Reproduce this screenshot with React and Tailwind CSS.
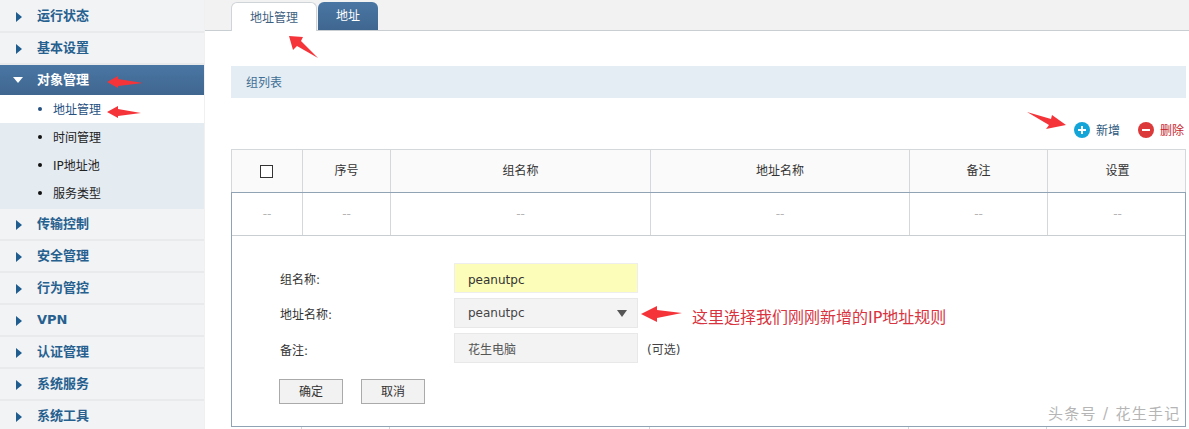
// App.jsx
import React from "react";

const FONT = { fontFamily: '"DejaVu Sans", "Noto Sans CJK SC", sans-serif' };

const topMenus = ["运行状态", "基本设置"];
const subMenus = ["地址管理", "时间管理", "IP地址池", "服务类型"];
const bottomMenus = ["传输控制", "安全管理", "行为管控", "VPN", "认证管理", "系统服务", "系统工具"];
const columns = ["序号", "组名称", "地址名称", "备注", "设置"];
const gridCols = "grid grid-cols-[71px_88px_260px_259px_138px_139px]";

const MenuItem = ({ label }) => (
  <div className="h-8 flex items-center bg-[#f2f3f5] border-b-2 border-[#e9eaeb] shrink-0">
    <svg width="6" height="10" viewBox="0 0 6 10" className="ml-4 mt-0.5">
      <path d="M0 0L6 5L0 10Z" fill="#1f5d8f" />
    </svg>
    <span className="ml-[15px] text-[13px] font-bold text-[#26608f]">{label}</span>
  </div>
);

const Field = ({ label, labelClass, children }) => (
  <div className="flex items-center">
    <span className={`w-[174px] text-xs text-[#333] ${labelClass}`}>{label}</span>
    {children}
  </div>
);

const Overlay = () => (
  <svg className="absolute left-0 top-0 pointer-events-none" width="1189" height="429">
    <g fill="#f5343a">
      <path d="M107 82L118 76L118 79L143 83L118 86L118 88Z" />
      <path d="M107 112L118 106L118 109L141 113L118 116L118 118Z" />
      <path d="M289 36L303 37L301 41L318 58L297 46L293 50Z" />
      <path d="M1066 125L1052 115L1051 119L1027 112L1049 125L1046 129Z" />
      <path d="M641 314L657 306L657 310L682 313L657 318L657 322Z" />
    </g>
  </svg>
);

const App = () => (
  <div className="relative w-[1189px] h-[429px] overflow-hidden bg-white flex" style={FONT}>
    {/* Sidebar */}
    <div className="w-[205px] h-full flex flex-col pt-px bg-[#f2f3f5] border-r border-[#f0f0f0] shrink-0">
      {topMenus.map((m) => (
        <MenuItem key={m} label={m} />
      ))}
      <div className="h-[30px] flex items-center bg-gradient-to-b from-[#4a76a4] to-[#3f668f] shrink-0">
        <svg width="10" height="6" viewBox="0 0 10 6" className="ml-[13px]">
          <path d="M0 0H10L5 6Z" fill="#fff" />
        </svg>
        <span className="ml-[14px] text-[13px] font-bold text-white">对象管理</span>
      </div>
      <div className="bg-[#e4ebf1] pb-[2px] shrink-0">
        {subMenus.map((m, i) => (
          <div key={m} className={`h-7 flex items-center ${i === 0 ? "bg-white text-[#26507f]" : "text-[#222]"}`}>
            <span className={`ml-[38px] w-1 h-1 rounded-full ${i === 0 ? "bg-[#26507f]" : "bg-[#111]"}`} />
            <span className="ml-[11px] pt-0.5 text-xs">{m}</span>
          </div>
        ))}
      </div>
      {bottomMenus.map((m) => (
        <MenuItem key={m} label={m} />
      ))}
    </div>

    {/* Main */}
    <div className="flex-1 flex flex-col min-w-0">
      <div className="h-[31px] bg-[#f2f2f2] border-b border-[#c9ced3] flex items-end pl-[26px] gap-px shrink-0">
        <div className="w-[86px] h-[29px] -mb-px pt-0.5 bg-white border border-b-0 border-[#cfd4d8] rounded-t-md flex items-center justify-center text-xs text-[#3f5f7f]">
          地址管理
        </div>
        <div className="w-[60px] h-7 bg-gradient-to-b from-[#4a76a4] to-[#3f668f] rounded-t-md flex items-center justify-center text-xs text-white">
          地址
        </div>
      </div>

      <div className="pl-[26px] pr-[3px] pt-[35px]">
        <div className="h-8 bg-[#e4edf3] flex items-center pl-[15px] pt-0.5 text-xs text-[#3f6f96]">组列表</div>

        <div className="h-[51px] flex items-center justify-end gap-[18px] pr-[2px] pt-[13px]">
          <div className="flex items-center gap-[6px] text-xs text-[#2d5a80]">
            <svg width="16" height="16" viewBox="0 0 16 16">
              <circle cx="8" cy="8" r="8" fill="#14a5d8" />
              <path d="M8 4V12M4 8H12" stroke="#fff" strokeWidth="2" />
            </svg>
            <span className="pt-0.5">新增</span>
          </div>
          <div className="flex items-center gap-[6px] text-xs text-[#c8232c]">
            <svg width="16" height="16" viewBox="0 0 16 16">
              <circle cx="8" cy="8" r="8" fill="#dc3a3a" />
              <path d="M4 8H12" stroke="#fff" strokeWidth="2" />
            </svg>
            <span className="pt-0.5">删除</span>
          </div>
        </div>

        {/* Table */}
        <div className="w-[955px]">
          <div className={`${gridCols} h-[43px] bg-[#fafafa] border-x border-t border-[#d5d8db] text-xs text-[#333]`}>
            <div className="flex items-center justify-center border-r border-[#d5d8db]">
              <span className="w-[13px] h-[13px] mr-px border border-[#333] bg-white" />
            </div>
            {columns.map((c, i) => (
              <div key={c} className={`flex items-center justify-center ${i < 4 ? "border-r border-[#d5d8db]" : ""}`}>
                {c}
              </div>
            ))}
          </div>
          <div className="border-x border-t border-[#8fa3b5]">
            <div className={`${gridCols} h-[43px] border-b border-[#c9ced3] text-xs text-[#b5b5b5]`}>
              {[0, 1, 2, 3, 4, 5].map((i) => (
                <div key={i} className={`flex items-center justify-center ${i < 5 ? "border-r border-[#d5d8db]" : ""}`}>
                  --
                </div>
              ))}
            </div>
            <div className="h-[191px] pl-12 pt-[27px] border-b border-[#8fa3b5]">
              <div className="flex flex-col gap-[5px]">
                <Field label="组名称:" labelClass="pt-1">
                  <div className="w-[184px] h-[30px] pt-[3px] bg-[#fbfdb8] border border-[#eeeeee] flex items-center pl-[13px] text-xs text-[#333]">
                    peanutpc
                  </div>
                </Field>
                <Field label="地址名称:" labelClass="pt-1">
                  <div className="w-[184px] h-[30px] bg-[#f3f3f3] border border-[#e8e8e8] flex items-center justify-between pl-[13px] pr-[10px] text-xs text-[#444]">
                    peanutpc
                    <svg width="10" height="7" viewBox="0 0 10 7">
                      <path d="M0 0H10L5 7Z" fill="#555" />
                    </svg>
                  </div>
                  <span className="ml-[54px] mt-2.5 text-base leading-none text-[#d8343f] whitespace-nowrap">这里选择我们刚刚新增的IP地址规则</span>
                </Field>
                <Field label="备注:" labelClass="pt-1.5">
                  <div className="w-[184px] h-[30px] pt-[3px] bg-[#f3f3f3] border border-[#e8e8e8] flex items-center pl-[13px] text-xs text-[#555]">
                    花生电脑
                  </div>
                  <span className="ml-[9px] pt-1 text-xs text-[#444]">(可选)</span>
                </Field>
              </div>
              <div className="flex gap-[18px] mt-4 -ml-px">
                <button className="w-16 h-[25px] bg-[#f2f2f2] border border-[#aaa] text-xs text-[#333]">确定</button>
                <button className="w-16 h-[25px] bg-[#f2f2f2] border border-[#aaa] text-xs text-[#333]">取消</button>
              </div>
            </div>
          </div>
          {/* next row, cut off by the window */}
          <div className={`${gridCols} h-4`}>
            {[0, 1, 2, 3, 4].map((i) => (
              <div key={i} className="border-r border-[#d5d8db]" />
            ))}
          </div>
        </div>
      </div>
    </div>

    <Overlay />
    <span className="absolute left-[1048px] top-[403px] text-[15px] tracking-[1.3px] text-[#b5b5b5] whitespace-nowrap">头条号 / 花生手记</span>
  </div>
);

export default App;
